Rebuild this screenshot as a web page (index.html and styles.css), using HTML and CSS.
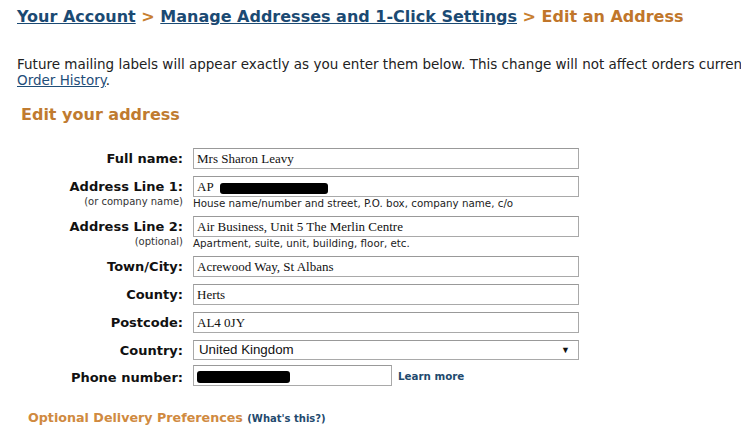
FILE: index.html
```html
<!DOCTYPE html>
<html>
<head>
<meta charset="utf-8">
<link rel="stylesheet" href="styles.css">
</head>
<body>
<div class="page">
  <h1 class="crumbs"><a href="#">Your Account</a> <span class="sep">&gt;</span> <a href="#">Manage Addresses and 1-Click Settings</a> <span class="sep">&gt;</span> <span class="cur">Edit an Address</span></h1>
  <p class="intro">Future mailing labels will appear exactly as you enter them below. This change will not affect orders curren<br><a href="#">Order History</a>.</p>
  <h2 class="sect">Edit your address</h2>
  <div class="form">
    <div class="row">
      <div class="lab"><span class="main">Full name:</span></div>
      <div class="field"><div class="box">Mrs Sharon Leavy</div></div>
    </div>
    <div class="row">
      <div class="lab"><span class="main">Address Line 1:</span><span class="sub">(or company name)</span></div>
      <div class="field"><div class="box">AP <span class="blot b1"></span></div><div class="hint">House name/number and street, P.O. box, company name, c/o</div></div>
    </div>
    <div class="row">
      <div class="lab"><span class="main">Address Line 2:</span><span class="sub">(optional)</span></div>
      <div class="field"><div class="box">Air Business, Unit 5 The Merlin Centre</div><div class="hint">Apartment, suite, unit, building, floor, etc.</div></div>
    </div>
    <div class="row">
      <div class="lab"><span class="main">Town/City:</span></div>
      <div class="field"><div class="box">Acrewood Way, St Albans</div></div>
    </div>
    <div class="row">
      <div class="lab"><span class="main">County:</span></div>
      <div class="field"><div class="box">Herts</div></div>
    </div>
    <div class="row">
      <div class="lab"><span class="main">Postcode:</span></div>
      <div class="field"><div class="box">AL4 0JY</div></div>
    </div>
    <div class="row">
      <div class="lab"><span class="main">Country:</span></div>
      <div class="field"><div class="box select"><span>United Kingdom</span><span class="arrow">&#9660;</span></div></div>
    </div>
    <div class="row">
      <div class="lab"><span class="main">Phone number:</span></div>
      <div class="field phone"><div class="box short"><span class="blot b2"></span></div><a class="learn" href="#">Learn more</a></div>
    </div>
  </div>
  <h3 class="opt">Optional Delivery Preferences <a href="#">(What's this?)</a></h3>
</div>
</body>
</html>
```

FILE: styles.css
```css
html, body {
  margin: 0;
  padding: 0;
  overflow: hidden;
  background: #fff;
}
body {
  font-family: "DejaVu Sans", Verdana, sans-serif;
  color: #222;
}
.page {
  padding: 6px 0 0 17px;
  width: 724px;
}
.crumbs {
  margin: 0;
  font-size: 16px;
  font-weight: bold;
  line-height: 22px;
  color: #c4792d;
}
.crumbs a {
  color: #1b4a73;
  text-decoration: underline;
}
.crumbs .sep {
  color: #c8802f;
}
.crumbs .cur {
  color: #c0762b;
}
.intro {
  margin: 28px 0 0 0;
  font-size: 13.5px;
  line-height: 16px;
  color: #222;
  white-space: nowrap;
}
.intro a {
  color: #1f4e79;
}
.sect {
  margin: 16px 0 0 4px;
  font-size: 16px;
  font-weight: bold;
  color: #c07b30;
  line-height: 22px;
}
.form {
  margin-top: 22px;
  display: flex;
  flex-direction: column;
  gap: 7px;
}
.row {
  display: flex;
  gap: 10px;
}
.lab {
  width: 166px;
  text-align: right;
  display: flex;
  flex-direction: column;
  padding-top: 3px;
}
.main {
  font-size: 13px;
  font-weight: bold;
  line-height: 16px;
  color: #111;
}
.sub {
  font-size: 10px;
  line-height: 14px;
  color: #333;
}
.field {
  width: 386px;
}
.box {
  box-sizing: border-box;
  height: 21px;
  border: 1px solid #a9a9a9;
  border-top-color: #999;
  font-family: "Liberation Serif", "Times New Roman", serif;
  font-size: 13px;
  line-height: 19px;
  padding-left: 3px;
  color: #111;
  white-space: nowrap;
}
.hint {
  font-size: 10.3px;
  line-height: 11px;
  color: #222;
  margin-top: 1px;
  white-space: nowrap;
}
.blot {
  display: inline-block;
  background: #000;
  vertical-align: middle;
  border-radius: 3px;
}
.b1 {
  width: 108px;
  height: 11px;
  margin-left: 4px;
}
.b2 {
  width: 93px;
  height: 12px;
  margin-top: -1px;
}
.select {
  height: 20px;
  display: flex;
  justify-content: space-between;
  align-items: center;
  font-family: "Liberation Sans", Arial, sans-serif;
  font-size: 13.3px;
  padding: 0 8px 0 5px;
  line-height: 18px;
}
.arrow {
  font-size: 9px;
  color: #111;
}
.phone {
  display: flex;
  align-items: center;
  gap: 6px;
  margin-top: -2px;
}
.short {
  width: 199px;
}
.learn {
  font-size: 10.3px;
  font-weight: bold;
  color: #1f4a6e;
  text-decoration: none;
}
.opt {
  margin: 23px 0 0 11px;
  font-size: 12.7px;
  font-weight: bold;
  color: #d08a40;
  line-height: 18px;
}
.opt a {
  font-size: 10px;
  color: #1f4a6e;
  text-decoration: none;
}
```
